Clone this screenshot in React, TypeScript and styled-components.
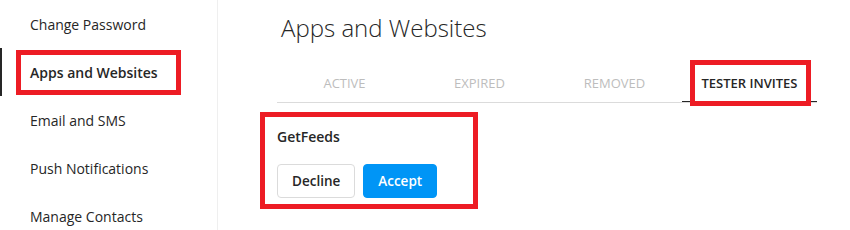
import styled, { createGlobalStyle } from "styled-components";

const GlobalStyle = createGlobalStyle`
  body {
    margin: 0;
    background: #ffffff;
    font-family: "Open Sans", "Noto Sans", sans-serif;
    color: #262626;
  }
`;

const Page = styled.div`
  display: flex;
  flex-direction: row;
  height: 230px;
  overflow: hidden;
`;

const Sidebar = styled.nav`
  width: 217px;
  flex-shrink: 0;
  border-right: 1px solid #efefef;
  display: flex;
  flex-direction: column;
`;

const NavItem = styled.div<{ $active?: boolean }>`
  height: 48px;
  flex-shrink: 0;
  display: flex;
  align-items: center;
  padding-left: ${(p) => (p.$active ? 28 : 30)}px;
  border-left: ${(p) => (p.$active ? "2px solid #262626" : "none")};
  font-size: 14px;
  font-weight: ${(p) => (p.$active ? 600 : 400)};
  color: #262626;
`;

// red annotation frame drawn over the marked element
const Marked = styled.span<{ $t: number; $r: number; $b: number; $l: number }>`
  position: relative;
  display: inline-block;
  &::after {
    content: "";
    position: absolute;
    top: ${(p) => -p.$t}px;
    right: ${(p) => -p.$r}px;
    bottom: ${(p) => -p.$b}px;
    left: ${(p) => -p.$l}px;
    border: 5px solid #ed1c24;
    pointer-events: none;
  }
`;

const Main = styled.main`
  flex: 1;
  padding: 0 0 0 59px;
  display: flex;
  flex-direction: column;
`;

const Title = styled.h1`
  margin: 10px 0 0 4px;
  font-size: 24px;
  font-weight: 300;
  color: #262626;
  line-height: 36px;
`;

const Tabs = styled.div`
  width: 540px;
  margin-top: 18px;
  display: flex;
  border-bottom: 1px solid #dbdbdb;
`;

const Tab = styled.div<{ $active?: boolean }>`
  width: 135px;
  height: 38px;
  display: flex;
  align-items: center;
  justify-content: center;
  font-size: 13px;
  text-transform: uppercase;
  color: ${(p) => (p.$active ? "#262626" : "#bdbdbd")};
  font-weight: ${(p) => (p.$active ? 600 : 400)};
  box-shadow: ${(p) => (p.$active ? "inset 0 -1px 0 #262626" : "none")};
  margin-bottom: -1px;
  border-bottom: 1px solid transparent;
`;

const Card = styled.div`
  margin-top: 25px;
  display: flex;
  flex-direction: column;
  align-items: flex-start;
`;

const AppName = styled.div`
  font-size: 14px;
  font-weight: 600;
  color: #262626;
  line-height: 18px;
`;

const Actions = styled.div`
  display: flex;
  gap: 8px;
  margin-top: 18px;
`;

const Button = styled.button<{ $primary?: boolean }>`
  height: 34px;
  padding: 0 14px;
  border-radius: 4px;
  font-family: inherit;
  font-size: 13.5px;
  font-weight: 600;
  cursor: pointer;
  border: 1px solid ${(p) => (p.$primary ? "#0095f6" : "#dbdbdb")};
  background: ${(p) => (p.$primary ? "#0095f6" : "#ffffff")};
  color: ${(p) => (p.$primary ? "#ffffff" : "#262626")};
`;

const navItems = [
  "Change Password",
  "Apps and Websites",
  "Email and SMS",
  "Push Notifications",
  "Manage Contacts",
];

const tabs = ["Active", "Expired", "Removed", "Tester Invites"];

export default function App() {
  return (
    <>
      <GlobalStyle />
      <Page>
        <Sidebar>
          {navItems.map((item, i) =>
            i === 1 ? (
              <NavItem key={item} $active>
                <Marked $t={13} $r={23} $b={13} $l={14}>
                  {item}
                </Marked>
              </NavItem>
            ) : (
              <NavItem key={item}>{item}</NavItem>
            )
          )}
        </Sidebar>
        <Main>
          <Title>Apps and Websites</Title>
          <Tabs>
            {tabs.map((t, i) =>
              i === 3 ? (
                <Tab key={t} $active>
                  <Marked $t={14} $r={13} $b={14} $l={12}>
                    {t}
                  </Marked>
                </Tab>
              ) : (
                <Tab key={t}>{t}</Tab>
              )
            )}
          </Tabs>
          <Card>
            <Marked $t={16} $r={41} $b={11} $l={17}>
              <AppName>GetFeeds</AppName>
              <Actions>
                <Button>Decline</Button>
                <Button $primary>Accept</Button>
              </Actions>
            </Marked>
          </Card>
        </Main>
      </Page>
    </>
  );
}
